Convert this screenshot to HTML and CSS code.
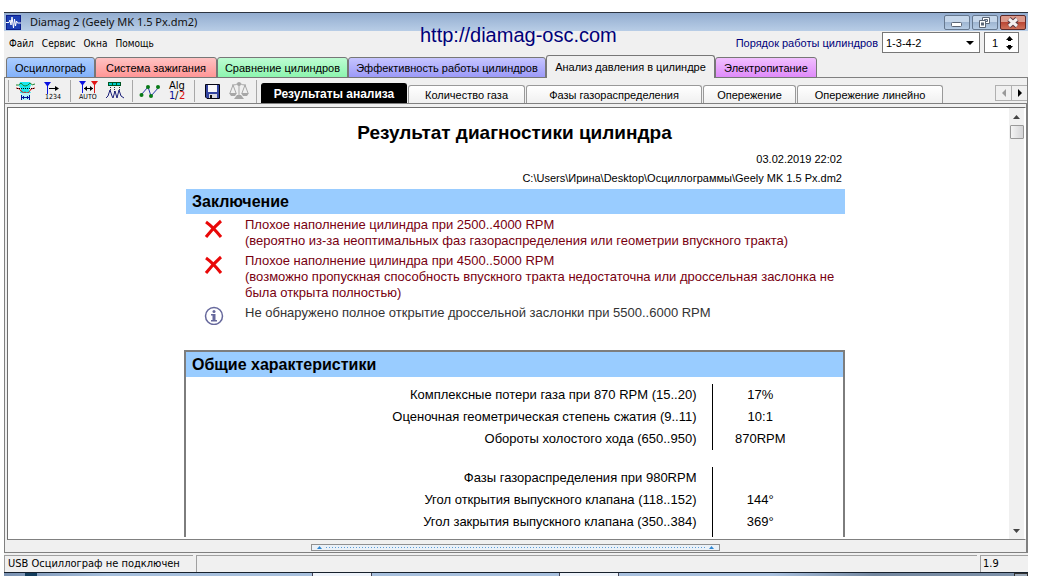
FILE: index.html
```html
<!DOCTYPE html>
<html lang="ru">
<head>
<meta charset="utf-8">
<title>Diamag 2</title>
<link rel="stylesheet" href="styles.css">
</head>
<body>
<div class="window">
  <header class="titlebar">
    <svg class="app-icon" width="15" height="15" viewBox="0 0 15 15"><rect width="15" height="15" fill="#0c1f8c"/><rect x="1" y="1" width="13" height="13" fill="#1c3fb4"/><path d="M0 7.5H3L4 5L5 10L6 2L7.5 13L8.5 4L9.5 11L10.5 6L11.5 8H15" fill="none" stroke="#fff"/></svg>
    <span class="caption">Diamag 2 (Geely MK 1.5 Px.dm2)</span>
    <div class="window-buttons">
      <button class="win-btn" aria-label="Свернуть"><svg width="24" height="13" viewBox="0 0 24 13"><rect x="6.500" y="6.500" width="10" height="4" rx="1" fill="#fff" stroke="#5b6575"/></svg></button>
      <button class="win-btn" aria-label="Восстановить"><svg width="24" height="13" viewBox="0 0 24 13"><path d="M9.500 1.500H16.500V7.500H9.500ZM11.500 3.500V5.500H14.500V3.500Z" fill="#fff" stroke="#5b6575"/><path d="M6.500 4.500H12.500V11.500H6.500Z" fill="#fff" stroke="#5b6575"/><rect x="8.500" y="7" width="2" height="2" fill="#9fb6d2" stroke="#5b6575"/></svg></button>
      <button class="win-btn win-close" aria-label="Закрыть"><svg width="24" height="13" viewBox="0 0 24 13"><path d="M8 3L16 10M16 3L8 10" stroke="#5a3a42" stroke-width="5"/><path d="M8 3L16 10M16 3L8 10" stroke="#f4f0f0" stroke-width="3"/></svg></button>
    </div>
  </header>
  <a class="site-link" href="http://diamag-osc.com">http://diamag-osc.com</a>

  <div class="menu-row">
    <nav class="menu">
      <button>Файл</button><button>Сервис</button><button>Окна</button><button>Помощь</button>
    </nav>
    <div class="firing">
      <label for="order">Порядок работы цилиндров</label>
      <div class="combo"><select id="order"><option>1-3-4-2</option></select></div>
      <div class="spin">
        <input id="cylinder" type="text" value="1" aria-label="Цилиндр">
        <svg width="9" height="14" viewBox="0 0 9 14"><path d="M4.500 0L8 4H6V5H3V4H1ZM4.500 14L1 10H3V9H6V10H8Z" fill="#000"/></svg>
      </div>
    </div>
  </div>

  <nav class="tabs">
    <button class="tab tab-scope">Осциллограф</button>
    <button class="tab tab-ignition">Система зажигания</button>
    <button class="tab tab-compare">Сравнение цилиндров</button>
    <button class="tab tab-efficiency">Эффективность работы цилиндров</button>
    <button class="tab tab-pressure">Анализ давления в цилиндре</button>
    <button class="tab tab-power">Электропитание</button>
  </nav>

  <div class="toolbar">
    <div class="tool-group">
      <button aria-label="Сигнал"><svg width="20" height="20" viewBox="0 0 20 20"><path d="M4 1H14L15 4L13 9L15 12H4L5 8L3 5Z" fill="#17e8ee"/><path d="M0 4Q3 5 5 2Q7 5 9 5Q12 5 14 2Q16 5 19 3" fill="none" stroke="#18862f"/><path d="M0 7Q4 7 5 10Q8 13 9 11Q12 14 15 8L19 7" fill="none" stroke="#d01818"/><path d="M1 7.500H19" stroke="#000" stroke-dasharray="1 1"/><path d="M5 12H14V19H5Z" fill="#b4f2f6"/><path d="M5.500 14V19M13.500 14V19M6 16.500H13M7.500 15V18M11.500 15V18" stroke="#00149a"/></svg></button>
      <button aria-label="Счёт"><svg width="18" height="20" viewBox="0 0 18 20"><path d="M0 1H7L4 5V13H3V5Z" fill="#0b12e0"/><path d="M5 7.500H14" stroke="#000"/><path d="M11 5L15 7.500L11 10Z"/><text x="1" y="18" class="icon-small">1234</text></svg></button>
    </div>
    <div class="tool-group">
      <button aria-label="Авто"><svg width="22" height="20" viewBox="0 0 22 20"><path d="M2 0H9L6 4V12H5V4Z" fill="#0b12e0"/><path d="M14 0H21L18 4V12H17V4Z" fill="#e01616"/><path d="M7 7.500H16" stroke="#000"/><path d="M7 7.500L10 5V10ZM16 7.500L13 5V10Z"/><text x="2" y="18" class="icon-small">AUTO</text></svg></button>
      <button aria-label="Импульсы"><svg width="20" height="20" viewBox="0 0 20 20"><rect x="3.500" y="1.500" width="12" height="3" fill="#0cc" stroke="#052"/><path d="M7.500 2V4M11.500 2V4" stroke="#052"/><path d="M5.500 6V11M9.500 6V12M14.500 6V11" stroke="#333" stroke-dasharray="1 1"/><path d="M1 17L3 15L5 9L7 15L8 17L10 10L12 17L14 9L16 15L19 17" fill="none" stroke="#1b1f78"/></svg></button>
    </div>
    <div class="tool-group">
      <button aria-label="График"><svg width="22" height="16" viewBox="0 0 22 16"><path d="M2 12L9 4L12 13L20 4" fill="none" stroke="#2336a8"/><g fill="#087a16"><circle cx="2.500" cy="12" r="2"/><circle cx="9" cy="4" r="2"/><circle cx="12" cy="13" r="2"/><circle cx="19" cy="4" r="2"/></g></svg></button>
      <button aria-label="Алгоритм"><svg width="20" height="22" viewBox="0 0 20 22"><text x="2" y="9" class="icon-text">Alg</text><text x="2" y="19" class="icon-text blue">1</text><text x="8" y="19" class="icon-text">/</text><text x="12" y="19" class="icon-text red">2</text></svg></button>
    </div>
    <div class="tool-group">
      <button aria-label="Сохранить"><svg width="15" height="15" viewBox="0 0 15 15"><path d="M.5.500H14.500V14.500H2L.5 13Z" fill="#3344a0" stroke="#050514"/><rect x="3" y="1" width="9" height="7" fill="#f8f8fa"/><rect x="4" y="10" width="8" height="4" fill="#d8d8e0"/><rect x="5" y="11" width="2" height="3" fill="#111"/></svg></button>
      <button aria-label="Весы"><svg width="20" height="18" viewBox="0 0 20 18"><g fill="none" stroke="#a7a7a7"><path d="M10 1V15M3 3Q7 3 8 2H12Q13 3 17 3M4 3L1 11M4 3L7 11M16 3L13 11M16 3L19 11"/></g><path d="M0 11H8L6 14H2ZM12 11H20L18 14H14ZM8 13H12L15 17H5Z" fill="#a7a7a7"/><circle cx="10" cy="2" r="2" fill="#a7a7a7"/></svg></button>
    </div>
    <div class="subtabs">
      <button class="subtab active w-results">Результаты анализа</button>
      <button class="subtab w-gas">Количество газа</button>
      <button class="subtab w-phases">Фазы газораспределения</button>
      <button class="subtab w-advance">Опережение</button>
      <button class="subtab w-linear">Опережение линейно</button>
    </div>
    <div class="tab-scroll">
      <button aria-label="Назад"><svg width="4" height="8" viewBox="0 0 4 8"><path d="M4 0V8L0 4Z" fill="#999"/></svg></button>
      <button aria-label="Вперёд"><svg width="4" height="8" viewBox="0 0 4 8"><path d="M0 0V8L4 4Z"/></svg></button>
    </div>
  </div>

  <div class="frame">
    <div class="viewer">
      <main class="document">
        <div class="sheet">
          <h1>Результат диагностики цилиндра</h1>
          <div class="meta">
            <div>03.02.2019 22:02</div>
            <div>C:\Users\Ирина\Desktop\Осциллограммы\Geely MK 1.5 Px.dm2</div>
          </div>
          <section class="summary">
            <h2>Заключение</h2>
            <ul>
              <li class="bad"><svg class="mark" width="20" height="20" viewBox="0 0 20 20"><path d="M2 3Q9 8 17 18M17 2Q9 9 2 18" fill="none" stroke="#e90808" stroke-width="3"/></svg>
                <p>Плохое наполнение цилиндра при 2500..4000 RPM<br>(вероятно из-за неоптимальных фаз газораспределения или геометрии впускного тракта)</p></li>
              <li class="bad"><svg class="mark" width="20" height="20" viewBox="0 0 20 20"><path d="M2 3Q9 8 17 18M17 2Q9 9 2 18" fill="none" stroke="#e90808" stroke-width="3"/></svg>
                <p>Плохое наполнение цилиндра при 4500..5000 RPM<br>(возможно пропускная способность впускного тракта недостаточна или дроссельная заслонка не была открыта полностью)</p></li>
              <li class="note"><svg class="mark" width="20" height="20" viewBox="0 0 20 20"><circle cx="10" cy="11" r="8.500" fill="#fff" stroke="#66689c" stroke-width="1.500"/><circle cx="10" cy="6.500" r="1.500" fill="#66689c"/><path d="M7 9H11.500V15H13V16.500H7V15H8.500V10.500H7Z" fill="#66689c"/></svg>
                <p>Не обнаружено полное открытие дроссельной заслонки при 5500..6000 RPM</p></li>
            </ul>
          </section>
          <section class="general">
            <h2>Общие характеристики</h2>
            <table>
              <tbody>
                <tr><th>Комплексные потери газа при 870 RPM (15..20)</th><td>17%</td><td></td></tr>
                <tr><th>Оценочная геометрическая степень сжатия (9..11)</th><td>10:1</td><td></td></tr>
                <tr><th>Обороты холостого хода (650..950)</th><td>870RPM</td><td></td></tr>
              </tbody>
              <tbody class="gap"><tr><td colspan="3"></td></tr></tbody>
              <tbody>
                <tr><th>Фазы газораспределения при 980RPM</th><td></td><td></td></tr>
                <tr><th>Угол открытия выпускного клапана (118..152)</th><td>144°</td><td></td></tr>
                <tr><th>Угол закрытия выпускного клапана (350..384)</th><td>369°</td><td></td></tr>
                <tr><th></th><td></td><td></td></tr>
              </tbody>
            </table>
          </section>
        </div>
      </main>
      <div class="scrollbar">
        <button aria-label="Вверх"><svg width="7" height="4" viewBox="0 0 7 4"><path d="M0 4H7L3.500 0Z" fill="#444"/></svg></button>
        <div class="thumb"></div>
        <button class="down" aria-label="Вниз"><svg width="7" height="4" viewBox="0 0 7 4"><path d="M0 0H7L3.500 4Z" fill="#444"/></svg></button>
      </div>
    </div>
    <div class="splitter">
      <button class="grip" aria-label="Развернуть панель">
        <svg width="5" height="3" viewBox="0 0 5 3"><path d="M0 3H5L2.500 0Z" fill="#2f86d0"/></svg>
        <span class="dots"></span>
        <svg width="5" height="3" viewBox="0 0 5 3"><path d="M0 3H5L2.500 0Z" fill="#2f86d0"/></svg>
      </button>
    </div>
  </div>

  <footer class="status">
    <div class="cell cell-device">USB Осциллограф не подключен</div>
    <div class="cell cell-main"></div>
    <div class="cell cell-version">1.9</div>
  </footer>
  <div class="taskbar"><span class="orb"></span><span class="task task-first"></span><span class="task task-second"></span><span class="show-desktop"></span></div>
</div>
</body>
</html>
```
FILE: styles.css
```css
* { box-sizing: border-box; }
body {
  margin: 0;
  background: #fff;
  color: #000;
  font: 11px/14px "Liberation Sans", Arial, sans-serif;
}
button, input, select {
  font: inherit;
  color: inherit;
  margin: 0;
  padding: 0;
  border: 0;
  background: none;
}
svg { display: block; flex: none; }
.window {
  position: relative;
  display: flex;
  flex-direction: column;
  height: 100vh;
  padding: 12px 12px 0 4px;
  overflow: hidden;
}

/* Title bar */
.titlebar {
  display: flex;
  flex: none;
  align-items: center;
  gap: 9px;
  height: 19px;
  padding: 0 2px;
  border-top: 1px solid #2c3440;
  background: linear-gradient(#93add0, #b8cde6);
}
.caption {
  flex: 1;
  font: 11px/16px "Noto Sans", sans-serif;
  color: #111;
}
.window-buttons { display: flex; gap: 2px; }
.win-btn {
  width: 26px;
  height: 15px;
  border: 1px solid #66788f;
  border-radius: 2px;
  background: linear-gradient(#c5d6ea 50%, #9fb6d2 50%, #b5cbe4);
}
.win-close {
  border-color: #5c2a2a;
  background: linear-gradient(#dd9a8c 50%, #bb4836 50%, #ce7059);
}
.site-link {
  position: absolute;
  left: 420px;
  top: 23px;
  font-size: 20px;
  line-height: 24px;
  color: #00007a;
  text-decoration: none;
}

/* Menu */
.menu-row {
  display: flex;
  flex: none;
  justify-content: space-between;
  align-items: flex-start;
  height: 24px;
  background: #f0f0f0;
}
.menu {
  display: flex;
  gap: 8px;
  padding: 6px 5px;
  font: 10px/14px "DejaVu Sans Condensed", sans-serif;
}
.firing {
  display: flex;
  align-items: center;
  gap: 4px;
  padding: 1px 9px 0 0;
  color: #00007a;
}
.combo {
  position: relative;
  width: 98px;
  height: 21px;
  border: 1px solid #777;
  background: #fff;
  color: #000;
}
.combo::after {
  content: "";
  position: absolute;
  right: 5px;
  top: 8px;
  border: 4px solid transparent;
  border-top-color: #000;
  border-bottom: 0;
}
.combo select {
  appearance: none;
  width: 100%;
  height: 19px;
  padding-left: 3px;
}
.spin {
  display: flex;
  align-items: center;
  width: 35px;
  height: 21px;
  padding-left: 7px;
  border: 1px solid #777;
  background: #fff;
  color: #000;
}
.spin input { width: 13px; }

/* Main tabs */
.tabs {
  display: flex;
  flex: none;
  align-items: flex-end;
  height: 23px;
  padding: 0 2px;
  background: linear-gradient(#808080, #808080) bottom / 100% 1px no-repeat #f0f0f0;
}
.tab {
  height: 21px;
  border: 1px solid #777;
  border-radius: 3px 3px 0 0;
  white-space: nowrap;
}
.tab-scope { width: 89px; background: linear-gradient(#abcdff, #82b1fa); }
.tab-ignition { width: 122px; background: linear-gradient(#ffc2c2, #ff9696); }
.tab-compare { width: 131px; background: linear-gradient(#bdfcd2, #8df5af); }
.tab-efficiency { width: 198px; background: linear-gradient(#c6c5ff, #9c9af8); }
.tab-pressure { width: 169px; height: 23px; border-bottom: 0; background: #f0f0f0; }
.tab-power { width: 102px; background: linear-gradient(#f1bfff, #df8bfa); }

/* Toolbar */
.toolbar {
  display: flex;
  flex: none;
  height: 26px;
  padding-left: 3px;
  border: 1px solid #808080;
  border-width: 0 1px 1px;
  background: #f0f0f0;
}
.tool-group {
  display: flex;
  gap: 1px;
  width: 62px;
  margin: 2px 0 1px;
  padding-left: 4px;
  border-left: 1px solid #a8a8a8;
}
.tool-group button {
  display: flex;
  align-items: center;
  justify-content: center;
  width: 26px;
}
.tool-group svg { overflow: visible; }
.icon-small { font: 7px "DejaVu Sans Condensed", sans-serif; }
.icon-text { font: 10px "DejaVu Sans", sans-serif; }
.blue { fill: #0a1296; }
.red { fill: #d81010; }
.subtabs {
  display: flex;
  flex: 1;
  align-items: flex-end;
  gap: 1px;
  margin-top: 2px;
  padding-left: 4px;
  border-left: 1px solid #a8a8a8;
}
.subtab {
  height: 18px;
  border: 1px solid #999;
  border-bottom: 0;
  border-radius: 3px 3px 0 0;
  background: linear-gradient(#fff, #f0f0f0);
  white-space: nowrap;
}
.subtab.active {
  height: 20px;
  border-color: #000;
  background: #000;
  color: #fff;
  font-size: 12px;
  font-weight: bold;
}
.w-results { width: 146px; }
.w-gas { width: 117px; }
.w-phases { width: 176px; }
.w-advance { width: 93px; }
.w-linear { width: 146px; }
.tab-scroll { display: flex; padding: 7px 0 2px; }
.tab-scroll button {
  display: flex;
  align-items: center;
  justify-content: center;
  width: 16px;
  border: 1px solid #b0b0b0;
  border-right: 0;
}

/* Report frame */
.frame {
  display: flex;
  flex: 1;
  flex-direction: column;
  min-height: 0;
  border: 1px solid #808080;
  border-width: 0 2px 1px 1px;
  background: #f0f0f0;
}
.viewer {
  display: flex;
  flex: 1;
  min-height: 0;
  margin: 3px 0 0 2px;
  border: 1px solid #6e6e6e;
  border-right-color: #fff;
  border-bottom: 1px solid #808080;
  background: #fff;
}
.document {
  flex: 1;
  min-width: 0;
  margin-bottom: 2px;
  padding-left: 12px;
  overflow: hidden;
}
.sheet {
  max-width: 661px;
  margin: 0 auto;
  padding-top: 13px;
}
h1, h2, ul, p { margin: 0; padding: 0; }
h1 {
  margin-bottom: 5px;
  font-size: 19px;
  line-height: 24px;
  text-align: center;
}
.meta {
  margin-bottom: 1px;
  padding-right: 3px;
  line-height: 19px;
  text-align: right;
}
h2 {
  padding-left: 6px;
  background: #99ccff;
  font-size: 16px;
  line-height: 25px;
}
.summary { margin-left: 2px; }
.summary ul {
  display: flex;
  flex-direction: column;
  gap: 4px;
  padding: 3px 0 29px 18px;
  list-style: none;
  font-size: 13px;
  line-height: 16px;
}
.summary li {
  display: flex;
  align-items: flex-start;
  gap: 21px;
}
.summary .note .mark { margin-bottom: -4px; }
.bad { color: #780010; }
.bad .mark { margin-top: 2px; }
.note { color: #333; }
.general { border: 2px solid #7d7d7d; border-bottom: 0; }
.general table {
  width: 100%;
  margin-top: 7px;
  border-collapse: collapse;
  table-layout: fixed;
  font-size: 13px;
  line-height: 16px;
}
.general th, .general td { height: 22px; padding: 0; }
.general th {
  padding-right: 15px;
  font-weight: normal;
  text-align: right;
}
.general td { width: 35px; text-align: center; }
.general th + td { width: 96px; border-left: 1px solid #000; }
.general .gap td { height: 17px; }

.scrollbar {
  display: flex;
  flex: none;
  flex-direction: column;
  align-items: center;
  width: 15px;
  margin-right: 1px;
  background: #f0f0f0;
}
.scrollbar button {
  display: flex;
  align-items: center;
  justify-content: center;
  width: 15px;
  height: 17px;
}
.scrollbar .down { margin-top: auto; }
.thumb {
  width: 14px;
  height: 14px;
  border: 1px solid #999;
  border-radius: 1px;
  background: linear-gradient(90deg, #f4f4f4, #d4d4d6);
}
.splitter {
  display: flex;
  flex: none;
  justify-content: center;
  height: 12px;
  padding: 4px 0 1px;
}
.grip {
  display: flex;
  align-items: center;
  gap: 4px;
  width: 40%;
  padding: 0 5px;
  border: 1px solid #909090;
  background: #eaf1f8;
}
.dots {
  flex: 1;
  height: 1px;
  background: repeating-linear-gradient(90deg, #5b9bd5 0 1px, transparent 1px 3px);
}

/* Status bar */
.status {
  display: flex;
  flex: none;
  gap: 3px;
  height: 19px;
  padding-top: 2px;
  background: #f0f0f0;
  font: 11px/15px "DejaVu Sans Condensed", sans-serif;
}
.cell {
  padding-left: 3px;
  border: 1px solid #a0a0a0;
  border-width: 1px 0 0 1px;
  white-space: nowrap;
}
.cell-device { width: 189px; }
.cell-main { flex: 1; }
.cell-version { width: 48px; padding-left: 2px; }
.taskbar {
  display: flex;
  flex: none;
  height: 4px;
  border-top: 1px solid #16202c;
  background: linear-gradient(90deg, #7890b0, #a6bfdc 10%, #a9c1df 75%, #73879f 85%, #7f93ab);
}
.orb { width: 12px; margin-left: 21px; background: #123c5c; }
.task { width: 60px; border: 1px solid #445; border-width: 0 1px; background: #eef3fa; }
.task-first { margin-left: 275px; }
.task-second { margin-left: 187px; }
.show-desktop { width: 14px; margin-left: auto; border: 1px solid #333; border-bottom: 0; background: #9aa7b6; }
```
